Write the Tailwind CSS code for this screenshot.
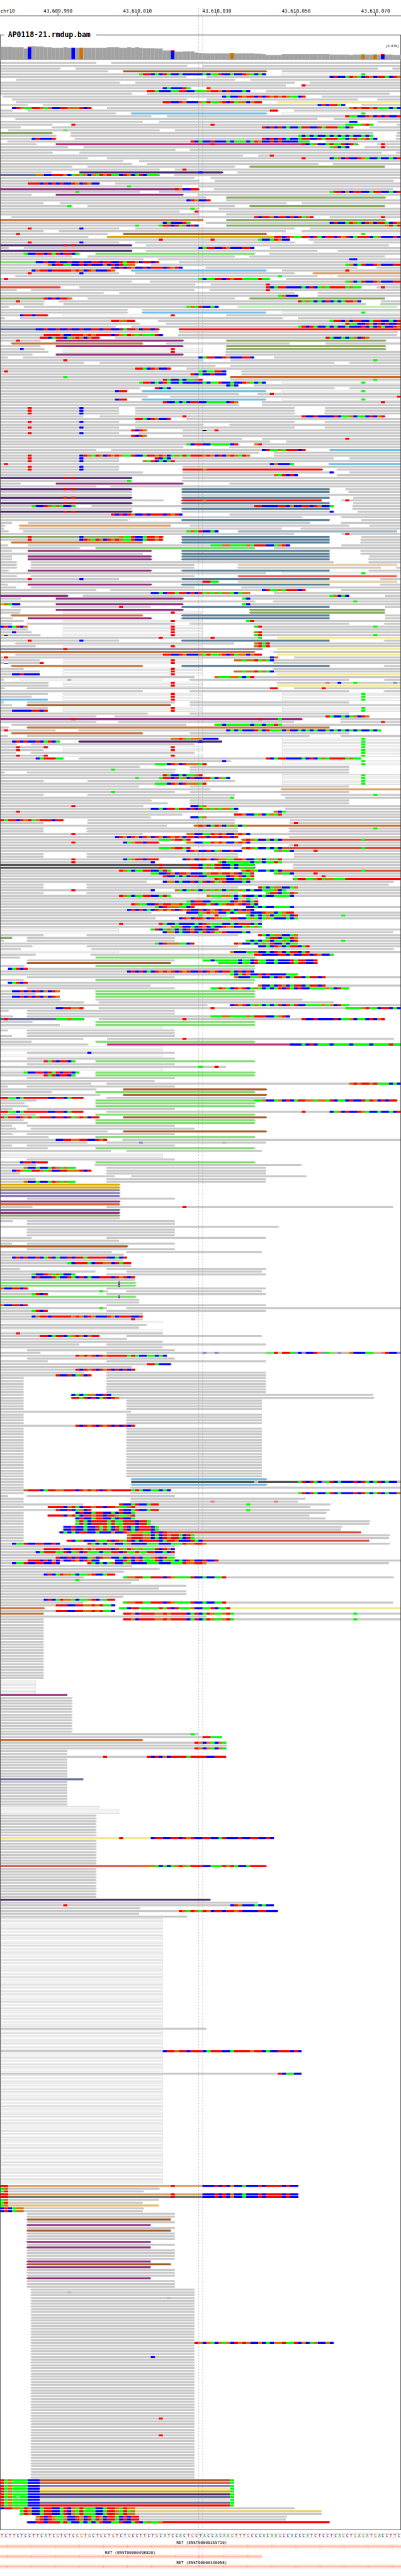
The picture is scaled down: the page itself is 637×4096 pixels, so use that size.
<!DOCTYPE html>
<html lang="en">
<head>
<meta charset="utf-8">
<title>AP0118-21.rmdup.bam</title>
<script src="https://cdn.jsdelivr.net/npm/@tailwindcss/browser@4"></script>
</head>
<body class="bg-white">
<main class="relative w-full overflow-hidden font-['DejaVu_Sans_Mono',monospace] text-black">
  <svg id="head" class="block w-full" viewBox="0 0 1000 150" role="group" aria-label="Position ruler and coverage">
    <path d="M0 39.5H1000" stroke="#000" stroke-width="1.2"/>
    <text x="1" y="32" class="text-[12px]">chr10</text>
    <path d="M0.5 150V87.5H10M240 87.5H999.5V150" fill="none" stroke="#000" stroke-width="1.2"/>
    <text x="20" y="92" class="text-[18px] font-bold">AP0118-21.rmdup.bam</text>
    <text x="995" y="118" text-anchor="end" class="text-[8px]">[0-878]</text>
  </svg>
  <svg id="reads" class="block w-full" viewBox="0 150 1000 6166" role="img" aria-label="Aligned reads">
  </svg>
  <svg id="foot" class="block w-full" viewBox="0 6316 1000 114" role="group" aria-label="Reference sequence and genes">
    <path d="M0 6325.5H1000M0 6335.5H1000" stroke="#aaa"/>
  </svg>
  <svg class="pointer-events-none absolute inset-x-0 top-0 block w-full" viewBox="0 0 1000 6430" aria-hidden="true">
    <path d="M495.5 20V6407M505.5 20V6407" stroke="#969696" stroke-width="1" stroke-dasharray="3 4"/>
  </svg>
</main>
<script>
const NS = 'http://www.w3.org/2000/svg';
const X = n => Math.max(1, Math.round(n * 1000 / 101));
function add(parent, name, attrs, text) {
  const el = document.createElementNS(NS, name);
  for (const k in attrs) el.setAttribute(k, attrs[k]);
  if (text) el.textContent = text;
  parent.appendChild(el);
  return el;
}
const head = document.getElementById('head');
const reads = document.getElementById('reads');
const foot = document.getElementById('foot');

/* Ruler ticks */
['43,609,990', '43,610,010', '43,610,030', '43,610,050', '43,610,070'].forEach((t, i) => {
  const x = 144.5 + i * 198;
  add(head, 'path', { d: `M${x} 32V39`, stroke: '#000' });
  add(head, 'text', { x, y: 32, 'text-anchor': 'middle', class: 'text-[12px]' }, t);
});

/* Coverage: column count x bar height */
const base = { A: '#00ff00', C: '#0000ff', G: '#d17105', T: '#ff0000', a: '#64e664', c: '#8888dc', g: '#ccb49e', t: '#e07878' };
const cov = [[3,31],[3,30],[1,27],[1,31],[1,33],[2,32],[2,30],[3,29],[1,30],[10,29],[3,30],[2,29],[1,30],[1,29],[1,30],[1,29],[3,28],[2,27],[3,22],[2,19],[3,20],[1,17],[1,16],[7,15],[1,16],[5,15],[2,14],[1,13],[4,11],[12,13],[5,12],[1,11],[7,12],[1,13],[2,12],[2,11]];
const snp = { 7: 'CT2', 18: 'CT0', 20: 'GT0', 43: 'CT2', 58: 'GA1', 91: 'GA2', 94: 'GA0', 96: 'CT2' };
let col = 0;
for (const [n, h] of cov) for (let i = 0; i < n; i++, col++) {
  const x = X(col), w = X(col + 1) - x, y = 148 - h;
  add(head, 'rect', { x, y, width: w, height: h, fill: '#b0b0b0' });
  const s = snp[col];
  if (s) {
    add(head, 'rect', { x, y, width: w - 1, height: h, fill: base[s[0]] });
    if (+s[2]) add(head, 'rect', { x, y, width: w - 1, height: s[2], fill: base[s[1]] });
  } else add(head, 'rect', { x: x, y: y + 1, width: w - 1, height: h - 1, fill: '#a2a2a2' });
}
add(head, 'path', { d: 'M1 148.5H999', stroke: '#7a7a7a' });

/* Read colours by mate chromosome; capitals are filled, grey-outlined reads */
const fill = { '': '#c8c8c8', n: '#a45a26', y: '#f2ea8a', c: '#6fbee6', o: '#87a961', m: '#bb2e7c', v: '#4b2468', s: '#666a9c', p: '#902f80', t: '#c6743e', g: '#d3aa00', l: '#80de70', d: '#dda066', r: '#d8503a', e: '#ff0000', q: '#587e98', k: '#545454', u: '#cf6424', w: '#948ca0', f: '#8b78b8', z: '#6e7a70', j: '#e6bc70', J: '#ead078', i: '#d8e4c4', x: '#ffffff', h: '#b8ffaa', P: '#fdd7a0', R: '#ff4040', B: '#94b4d0' };
const outlined = 'xhPRB';

/* Rows: "colour<start-end>" reads, "startBASES" mismatches, "!" deletion, "|" insertion, "*n" repeat */
const V = 'v-33> 16T 18T ', W = 'x<16-51 43T ', Z = 'x71- 91A', Q = 'q<46-83 ', D = '-30 7T 20C ', L = 'l24-64>';
const LONG = '35ATTCACTACCACCCCCACAATCCACCTGACAC';
const S41 = '41TTCCTGCCCGATAAGTCTAGGCGTT';
const S67 = '67TCATTCCCCACTCAGATTTTAGAA';
const S83 = '83CTCCATGACTGCTTACTG', S83b = '83CAGCTCCTGACCACCACT', S83c = '83ATTCGCTTCCATTCCACT';
const S87 = '87TAACCTGCTCTCCT', S87b = '87AGCATCCTGCCCTT', S88 = '88GTGTTGTAAACAC', S82 = '82TACCACAGCTG';
const S9 = '9CCTCCTCCTCCTCCTTCTTCCTATTGCTTCT';
const S50 = '50CATTCCTGCCCTTC', S28 = '28TCTCTGCCTCTTTCTGTC';
const S3 = '3CTGAATTGAGCCTTGGGTCT', S6 = '6ACCTTCTATCTTCA', S66 = '66CTAAGATTTCT';
const S76 = '76TCCTCCCCTCAAGCAACTCGT', S64 = '64TTCCCCTTCGCCTTCTGCCA';
const S53 = '53AAAGGAAAAGATTTCCAGTC', S32 = '32CTCTCACTGTGTCTGTCCTCTGTCTTACTCTC';
const S61 = 'r<61- 61GTGACCACAC 91A', S48 = 'k-64> 40T 48TTCAGATTCCACAAAA <74-';
const S46 = '47GGCCAATGTGCCGTGC', S41b = '41CGGCACCTCATCTAGTCCCCAC';
const S0 = '0TTAACATTTTTTCCTTCATTT', S12 = '12TTTTCGTACTTGTTCTTGAAGT', S19 = '19CTCCATTCCACTCCA', S19b = '19ATACTTTTATAATTTCTTA';
const S16 = '16CCTCCACCTATACTATCACTTTCA', S32b = '32GTTTGGCACTGTTACTA', S22 = '22TACACAGCCAGCCCCAAACCCAAATGGTTG';
const S31 = '31AGGTTAATTTCTGAAAATCCACCAAT', S31b = '31TTGCTTTTGGTGTTTTCATCATGAAGTA';
const S51 = '51CCCTCTCGCCACCCTCTTTTCTCC', TA = ' 0TAGAAAACCC 58A';
const rows = `
-24> 28-
-47> 51-
-15> 19-95> <99-
-27> n31-67> 71-
-67> ${LONG} ${Z}
-47 52- ${S83}
4-59> 63-
-30> 34-74> 78-
-72 76- 76T
-48> 41CACCCTA 52- 52T
-63 37TTACCCAATTCCAAAGTTGCTCCCAC 67-
-33> 37-98>
<1-77 56CACCTGTTCTCTGTGTGAACT 81-
3-47> 52-90> 95-
4-66> ${S41} y<70-
-7 <11-87 80CTCTTAC 91-
3-23> ${S3} 27- ${S88}
-3> 7-70> 68TT 74-
-29> c33-67> ${Z}
-38> 42- ${S87}
<4-80 84-
-36 40-90> 88CC 95-
-13> 18-94> 18T 53T 87AAAAGTA 100-
-5> 13-89> 66TCTCTCACCATTCCTATTTAACG 93-
2-40> 16a 44-
o-13> <18-94 100-
-14> <18-94 75ACACACCACACACACCACA <100-
-14> 8CTCCCT <19-95 66TCTCTCACCATTCCTATTTAACGTAGTAC <100-
<2-78 48TCACCTCCCACAAACATGCCTCTCCCCAAA 82-
-9> m14-90> 53T 76TCAGCCATAATCTA 95- 96T
-17> 21-88> 83AGCAC <92- 96T
-44> <48-
-13> 20-96> <100-
-61> 65- 68T
-22> 27- 76T ${S83b}
-31 35-
-33> 37-80> <84-
-18> 22-59> o<63-97
-40> 44- 46T
-13 v20-56> 50C <60-
s-40> 9GGCCTTTGCAGAGCGATGTAACTGCATCAAA <44-
-49 53-
-50> 54-99>
-25> 7TTTCTCTCTCCTGCTGCC 29-
-46 32A 50-
p-50> 44TGCCTT <54-99
-35> 19A 40- ${S83c}
-8 p14-46> <50-
-52 o57-97>
-53> 47CTGCCT 57-
-11 15-72> 76-
-18> 17A 22-59> o<63-97
-50> 48A 55-
-45> 49- 49T
-50> 57-
<3-79 64TCTTGCTTCTCTAGT 83- 96T
t-51> o57-97>
-48 41CACCCTA <52- ${S83}
-50> 34A 40ATTCTAGCTC o57-97 97GTAT
${D} 34-74> 78-
-11 <15-72 76-
-27> 4T n31-67> ${Z}
-22> g27-69 69TTCTGAATTCTACTTCTGTCATTTCAGCCCTC
-73 40T 53T 65ACCATGCC <78-
${D} 34-74> 79-
${V} <37-98
-2> 6-64> ${S50} 68-
${V} <37-80 85-
-20> ${S6} ${L} <68-
-18> 22-59> <63-97
-36> <40- 88CC <95-
l-40> ${S9} 45-
-34 12GCTTAACCTCTCCCGCTCTAGG 38- ${S87b}
-46> ${S28} <52-90 <95-
-29> 8CGTTCTTTTTGTGCTGCCCTG c33-67> 71- 87T
${D} 34-74> d<79-
<4-80 70A 85-
-68 1T 50ACAATTCTGTTAAAATAA 72-
-33> <38- ${S87b}
-49> 53- 67T
r-15> 20-91> ${S67} <95- 96T
-4> <8-49 <53- 67T
-26> 30-74> 80-
-75> 70AGCCC 80-
o-18> 11TCTCTTG 22-59> o<63-97
-11> 4T <15-91 75TAGACACTCACATTGC 96-
-11 16-92> <96-
-2> 6-55> 47AGATCCAC h<60-100
-32> <36-
-32> c<36-67 ${Z}
-12> 5CTTCTTT ${W} 57-
-1> 5-71> 75-
-34 28TTGGTT <40- ${S83c}
-35> <42- ${S87}
-29> 33- 75ATCTACCACACCACCCTCACTACCTG
s-40> ${S9} e45-
-40 45-100>
-41> 11TTTTGCCTTTGTGTTTTCTGATGAGAAATC <45-100
-25> 10TTCATTCAGTGCGTT 29- ${S82} 97-
-10> 4T p14-46> o57-97>
t<3-36 <42-73 82-
-10> p14-46> o57-97>
-11> 5C ${W} o57-97>
-12> ${W} <57-
-8> p14-46> <57-
-2 <6-64 ${S50} 69-
-51> 16T 58- 94A
-21> 25-84> 88-
-54> 58-
-43> 34TTACTGCCT 47-
-57> 1T 50ACAATTC <61-
-57> 48TCACCTCCC <61-
-50 16A u58-
-51> 41TACCACAAGT 58- 94A
-67 ${LONG} ${Z}
-60> 57CAC <64-
-35> 39-84> 39TCAC 88-
-32> 29CTT c<36-67 ${Z}
-60> <65- 68T
-37> <43- 100T
-32 29CTT c<36-67 ${Z}
-60> 41TCCACACTTCCAAAAACTG 66- 96T
-60> 66-
${D} 34-74> <82- *3
-21 25-97> 46T ${S76}
-43 34TTACTGCCT 47-
${D} 34-74> <82-
-51> <58-
${D} 34-74> <82-
-37> 33TCTG 46- 51! 54T
${D} <35-
-37 33TCTG 46-
-61 66- 87T
-68 72-
-60> 47ACTTCCAAAAACT 66- 64GT
-46> <58-
-24> 28-77> ${S66} c83-
-65> 69-
-63 7T 20CTGATGCTGTGAATCCATTGTGCAGATATTTGTGCTCGTGATG 69-
${D} <39-84 39TCAC 88-
${D} 36GATCACAT 44-
-74 1T 68CGCCCA c<83-
${D} 46-
${D} e46-81> 51G <85-
-36 46-84> 83C 88-
-75 69GATCTC <85-
${V} 46-
-33> 32A <46-
-5> p14-46> <58-
-24> <28-
${V} ${Q} 87-
-33> ${Q} <88-
-33> <46-
${V} ${Q} 89-
-41> e<46-81 51G 86- 87T
${V} ${Q} 89-
-19> 8ACCTGAGACCA 23-84> ${S64} <89-
-33> ${Q} <89-
${V} <46-83 83C 90-
-46 ${S28} <58-
-76> 86-
-32> ${Q} 91-
-3 7-78> 86-
-1> d<5-43 <48-88 93-
-1 <5-71 <76-
-2> <6-55 47AGATCCAC B<60-100
-74 86- 87T
o-41> 7T 20C 30GAATCCATTGT ${Q} 91-
-41> 7T 20CTGATGCTGTGAATCCATTGT ${Q} <91-
t<3-36 ${Q} <91-
-2 7-73> ${S53} 86-
-20> ${L} 69-
-3 p7-38> ${Q} <91-
-36 ${Q} <91-
-3 p7-38> ${Q} 93-
-3 p7-38> ${Q} <93-
-4> <8-84 <93-
-4> <8-49 P<60-100
-4> <8-49 <60-96 <100-
-2> p7-38> ${Q} <93-
-67 ${Z}
-4> <8-49 R<60-100
${D} ${Q} <96-
-55> 51TTAA P<60-100
-2 p7-38> ${Q} <96-
-4 <8-49 <61-
-24> <28-77 ${S66} 86-
-63 38CCACTTATTCTCTAGAGAGGACAGG 69-
p-17> <21-88 83AGCAC 97-
-5> p14-46> 61- 61AC
-64> <69- 89A
g-5> 1GACC p14-46> <61- 61AC
<3-38 30T ${Q} 97-
-5> p14-46> o<63-97
-5 ${W} o<63-97
t<3-36 ${Q} 97-
-3> p7-38> ${Q} 97-
-6 ${W} <62- 62AT
-3 <7-44 <48-88 <97-
0CTCATCG ${W} 64- 64AT 94A
-7 ${W} <66-
-8 3C ${W} <64- 64GT
-10> 1! ${W} <64- 64AT 94A
-66> 40T 53T 65A y<70-
${D} ${Q} <97-
<4-59 64- 64GTAT
-9 ${W} <64- 64GTAT
w-66> 16T y<70-
t-64> <69-
<4-66 ${S41} y<70-
-70> 1T 68CG 74-
-10 ${W} 59- 59GGAGGTAGAC
-10 1! 10T ${W} <69-
t<3-36 ${Q} <97-
-6 ${W} <69-
-10 ${W} <59- 59GGAGGTAGAC
-10 3CCTCCCC ${W} y<70-
-49 54- 54GAAAGGACAT
-1 x<5-41 17g <48-88 <97-
-12> ${W} <70- 82t 85C 89A 99c
-12> ${W} y<70-
-1> <7-70 68TT 74- 81T
-36 <48-88 <97-
-12 ${W} ${Z}
-8 ${W} ${Z}
c-12 ${W} ${Z}
-1 <7-44 <48-88
-3 n<7-43 <48-
-12 ${W} ${Z}
-12 3CCCCCTTCT ${W} ${Z}
-37> <48-88
-24> <29-93 ${S82}
p-76> 18T 65T 70A <86-
-24> <30-74 <86- 96T
<3-47 54- 54AACAAAAAACAACAATA
-2> t<7-83
-14 1T <20-96 57CACACCCTACTAAACGCCACACACCACACACACACCACA
t<3-36 <48-88
-2 <7-78 <86-
-55 43GGTGAGGGCCCC ${Z}
-15> 3CTCTCCTCATCA v<20-56 50C ${Z}
-4> <8-49 ${Z}
-12> 4T 11T ${W} ${Z}
-11 4T ${W} ${Z}
-4 <8-49 ${Z}
-12 4T 11T ${W} ${Z}
-16> 9CATTTAA <20-91 ${S67}
-58> 56C ${Z}
-52> 39AAACTGCTGGGAT ${Z}
-35> <48-88
-44> 28A <48-88
-1> <7-44 <48-88
-51 41TACCACAAGT ${Z}
-58 34A 40ATTCTAGCTCCTTACGAC ${Z}
-11 22-59> ${Z}
-52 39AAACTGCTGGGAT ${Z}
-35 <48-88
-53 d<71-
-44 28A <48-88
-11 22-59> <71- 94A
-59 58A <72-
-38> <48-88
-42> <48-88
-36> 18T 48- 48CCAG
-60> 38CCACTTATTCTCTAGAGAGGAC <72-
-60 4T <69- 69GCA
-46 <59- 59TTGCCAGCAGAT
-38 <48- 48CCAG
-16> 0TATTCTGTAGTTTCTT 22-59> 73-
-11 22-59> 73- 74T
-42 u<49- 49GTGCATGCAGACA
-11 <22-60 <73- 94A
-11 <22-60 <73-
-36 18T 47- ${S46}
-60 29CTGCTGCTGCTGCTGTGCTTCTTCTTCTTCT <73-
-48> 40AAAGTTAT ${S61}
-40> 18T 31CAGTTCTTT <47- ${S46}
-61 <73- 74T
-48 40AAAGTTAT ${S61}
-61 47CTGCCTCAGCCTCC 69- 69AGAAC 79T
-11 <22-60 74- *2
-40 18T 31CAGTTCTTT 46- 46CTGCTTGCTGGAATTGCCAGCAGAT
-39> 18T 38C <55- 55ACAAAAAACAACAATA
${S48} *2
-43> 30TGACAATTCCATA ${S61}
-64 38AACCTGCTTGCCCAGTTGTTGTCAAT <69- 69AGAAC 79T
-64 41TCCACACTTCCAAAAACTGTCAT <74- 81T
-64 54TGGCCAGAGA e<74- 74ATTAAGTAGGAAA
-37 41-99> ${S41b}
-11 <22-98
-11 <22-60 65- 65TACAGGCCAG
-39 18T 38C 44- 44GACAGACAGAGACAGAGACACCAAAGCA
-11 <22-60 67- 67ATTCAATG
-43 30TGACAATTCCATA 52- 52GAAAGGACATCCACACCAAAAC
-65 59C 62A
-65 47ACTTCCAAAAACTGTCAT
-65 33TGAACCTGTTGGTAATTTTATCAGTTGTCTAC
-49> 39ACTGGGAACT <62- 62CCACACCAAAAC
-64> ${S32}
-38> <47- 47CCCAGTGGCCACAGGGCCCTGGCAGTT
-57> 50A 54T 62- 62ACACAGCAAGACT 86A
-39> 45- 45CTGCTTGCTGGAATTCCAGACAGACCCACA
-66>
-66 30T 40TACCACCCCACTGAAACCACTTTCAC
-66 43GAGCCACTGCACCTGGCCAGAGA
x-30 <38- 38ATCAGACACTGCCTCCT
x-30 <41-99 ${S41b}
-11 <22-60 <65- 65TACAGGCCAG
o-3 <7-44 <67- 67ATTCAATG
-1 <7-44 <62- 62ACACAGCAAGACT 86A
-49 39ACTGGGAACT <59- 59TGCCACAGATCCACAA
-8> <22-60 <65- 65CCACTGCATTCAT
-5> 23-99>
x-30 58- 58GCCCAAGCCACTGCATTCAT
-9 <23-84 ${S64}
-5 ${L}
<7-44 51AACAAAAAACAACTAACCACCCTATTCCT
n<7-43 <55-80 55AAAAACAACTAACCACCCTATTCCT
-6> ${L}
2-64> 2CATCT
-64 ${S32}
-75 58ACATGCCTCTCCCCAAA
<7-44 59- 59GCCCAAGCCACTGCATTCATTCT
-6 ${L}
<2-64 2CATCT
-38 <65- 65GCCACTGCATTCATTCT
<7-44 53AATGACTGTCAGACACATCTACTCCAAAAGACTAA
-15> 3CCTCTCTCGCTG ${L}
-9 ${L}
-15 3CCTCTCTCGCTG ${L}
-15> 24-76>
-21> <25-84
-52> <58- 58CTGTCAGACACATCTATCCAAAAGAGCTAA
-21> 14CCTTGGT <25- 53T 87AAAAGTAACTTCAC
-2> <7-44
<7-44
-3> <7-73 ${S53}
s-21> 1T 14AAAGAAA <25-97 46T ${S76}
-8> ${L}
-15 ${L}
x-41
-2 <7-44
<7-44
-3 <7-44
-21 27-99> 46T
-8 ${L}
-22> m27- 73CCCACTCAAACAAAACAAAACAAAATAA
x-41 *2
<7-44 22C
x-41
<7-44
-19> 11TATCTTCA ${L}
<7-44
-57 50A 54T
x-41
-20 ${S6} ${L}
-19 11TATCTTCA ${L}
<7-44
-39
-23 <27- ${S88}
-2 <7-44
-24> n31-67>
-13 ${L}
-25> n31-67>
-21> ${S0} <27-67
-9> l24-100> 64AAGCCAGCTCATTGGAGGATCAACTCCTATGCTCTT
-6> ${L}
-7> ${L}
-3> <7-44
-21 ${S0} <27- 76T ${S83b}
-9 ${L}
-25 0TATTCTGTAGTTTCTTCTAGTGCTT n31-67>
-6 ${L}
-7 ${L}
-3 <7-44
-4 <8-49
-27> n31-67>
-3> <7-44
-12> ${L}
-27 14CCTTGGTTCCTGT <31-
-22 <27-67 35c 56g
-3 <7-44
-12 ${L}
-28 <32-66
x-41 *2
<7-44
-12 5CTTCTTT ${L}
-9> <24-76
-19> 6GCCACCATGAGAA <27-67
-23 ${S3} <27-67
-5 <27-67
-29 33-77>
-9 <27-67
-19 6GCCACCATGAGAA <27-67
g-30> *2
w-30>
f-30> *2
<7-44
p-30>
u-30>
-8> <27-99 46T
s-30>
p-30>
o-30>
-30>
-3> <7-44
<7-44
-70>
<7-44 *3
-8 <27-67
-30
-3 <7-44
n-32>
<7-44
-28> <32-66
-31>
-32 3CTCTCCTCATCACCTCTTATTTTTCCACT
-31
-33 17ACTTTACTTGGCTATT
-33
-5 <27-67
-24 <32-66
-19 8ACCTGAGACCA <27-67
-34 8CTCCCTACCTACTCACCTTTCTGTCT
-34
l-34> 30| *2
-7> 0GCCTTCT <27-67
-27> 25A <32-66
-12> 8ATCT <27-67
l-34> 30|
-35 *2
-7 0GCCTTCT <27-67
-27 25A <32-
-12 8ATCT <27-67
-36
-36 8CGTTCTTTTTGTGCTGCCCTGCTTTCCT
-36 33T
x-41
-37
-35
x-41
-41 4T
-25 10TTCATTCAGTGCGTT <32-66
-32
-41
-20 <27-67
-41
<7-44
-10> <27- 51c 54c 67aaTgTTAcCcCCTtcAagcggGCCCAAggtTCCc
-42 19TGTGTCTGTTTTTATACCAACAC
<7-44
-12 <27-67
-43> 37TTACCC
-33>
-34> 19TCTGTCTGTCTCTCT
-21> <27-67
-23> 14TCCTCAGCT <27-67
-6 <27-67 *6
-6 <18-94 18CACAGGCCTC
-6 18-94> 18TTATCTCATCTG
-6 <32-66 *4
-33
-6 <32-66 *4
-34 19TCTGTCTGTCTCTCT
-6 <32-66 *18
-6 c33-67>
-6 k33- 64g 75ATCTACcATCACCCTCTACATCACCg
-6 c33-67>
-6 <33-
-43 6GTTTCATTGGTTTCTGTGTCTGTTTTTATACCAACAC
-6 <33- 75ATCTACCATCACCCTCTACATCACCG
-2 <7-44
-6 <33-77
-6 <33-75 53t 69t
-21 30-83> 30TCCATCCATT 62A
-6 12-78> ${S12}
-23 14TCCTCAGCT <30-83 30TCCATCCATT 62A
-6 19-82> ${S19}
-6 <12-78 ${S12}
-6 <19-82 ${S19}
-6 19-93> ${S19b}
-6 <19-93 ${S19b}
-6 16-86> ${S16}
-6 <16-86 ${S16}
-6 r<15-91 15CACACTTCCACCCGCCTGAGGAACTCT
-6 32-98> ${S32b}
-6 <32-98 ${S32b}
-6 r<17-93 17TCAGCCCGAATCTGATCACTTTTCATTGCCCTAC
-15> 3CAATCCTTCCTC 22-98> ${S22}
-44
-44 11TTTTGCCTTTGTGTTTTCTGATGAGAAATCTGC
-44 9CATTTAATCAGCTAAACAATTCTAATAATTCCACT
-44
-44 14TCCTCTCCAGCTGGCCACTCTCAAGTCTAA
-25 7TTTCTCtCtCCTGCTGCC 29- 29CCTACGTAAATCAGACACTGCCTCCT
-15 3CAATCCTTCCTC <22-98 ${S22}
-33>
-40>
-31>
-29> 11CTCATGGACAAGTCCATT
-21> 31-99> ${S31}
-35 19A
-33
-47
-40
-47 *2
-31
-29 11CTCATGGACAAGTCcATT
-21 <31-99 ${S31}
-29> 14TTTCCTTGGTGTAAC
t-11> y<30- 30AACTTAAAAATATCTAAAGCCAATCAAT
-29 14TTTCCTTGGTGTAAC
t-11 31- ${S31b} 89A
-52
-11 31- ${S31b} 89A
-11 *21
x-9 *5
p-17
-18> *13
-50 48A
-56 51TTAAA
t-36
-57> 49TGCGACGA
-57>
-57> 49TGCGACGA
-17 *2
-57 26T 37TCTCGCTTTTATTTTCCTTT
-17 *7
s-21
-17 *9
x-25
x-30 *2
-24> *8
y-69> 30T 38CTTCCTTCTGTCCTTCCATCCCTCCTTCCTC
-24> *9
r-67> 36GGGACACAGTGATTTCCAAATGTACCATTTT
-24> *11
v-53
-65
-69 16T 58CTGCCCACACC
-35>
-70 45TGATGATGCTTCTTGTCCCCTTCCC
-35
-47>
x-41 *39
-52
x-41 *7
-76 41CTTGTTCTTTCATTTCCATTTTGTTCACCTTTCTC
x-41 *7
-76 70TCAACC
x-41 *39
d-75> 0TT 43T ${S51}
-40> 0AG
-36> 0AT
d-75> 0TT 43T ${S51}
z-75> 0TT 43T ${S51}
-40 0AG
-36 0AT
j-40 0AG
-36> 0CTCAGG
-36 0CTCAGG
<7-44 *2
n<7-43
<7-44
p<7-38
<7-44
n<7-43
<7-44 *3
p<7-38
<7-44
p<7-38
<7-44 *4
p<7-38
n<7-43
p<7-38
<7-44 *3
p<7-38
<7-44 *3
<8-49
<8-49 17g
<8-49
<8-49 42g
<8-49 *15
<8-84 49TGCGACGAGCTGTGCCGCACGGTAATCGCAGCCGC
<8-49 *4
<8-49 38C
<8-49 *21
<8-49 40T
<8-49 *5
<8-49 40T
<8-49 *15
n10-58${TA}
r10-58${TA}
f10-58${TA}
y10-58${TA}
g10-58${TA}
v10-58${TA}
s10-58${TA} 4a
i10-58${TA}
s10-58${TA}
e10-58${TA}
-74> 0CTTGGATGCCATTCCATCGATAAACCATTGATGG
J<5-81 5ATGCCATTCCATCGATAAACCATTGATAG
<5-81 5ATGCCATTCCATCGATAAACCATTGATGG
9-72> 9GTCTGAAGCCTGCTATGCTTACTCTT
<9-72 9GTCTGAAGCCTGCTATGCTTACTCTT
e<7-83 7CCTTCTTTATACCACACATCCAATCCATCAGAAG
`.trim().split('\n');

const bars = {}, edges = [], marks = {}, gaps = [], dels = [], ins = [];
const box = (x, y, w, h) => `M${x} ${y}h${w}v${h}h${-w}z`;
let y = 154;
for (const row of rows) {
  const tokens = row.trim().split(/\s+/);
  let times = 1;
  if (tokens[tokens.length - 1][0] === '*') times = +tokens.pop().slice(1);
  for (; times > 0; times--, y += 7) for (const t of tokens) {
    let m = t.match(/^([A-Za-z]?)(<?)(\d*)-(\d*)(>?)$/);
    if (m) {
      const a = X(+m[3] || 0), b = Math.min(999, X(m[4] ? +m[4] : 101));
      let d;
      if (outlined.includes(m[1]) && m[1]) {
        d = box(a, y, b - a, 5);
        const l = m[2] ? `l-3 2l3 2` : 'v4', r = `V${y + 0.5}`;
        edges.push(`M${a + 0.5} ${y + 0.5}${l}H${b - 0.5}${r}z`);
      } else {
        d = `M${a} ${y}H${b}${m[5] ? 'l4 2.5l-4 2.5' : 'v5'}H${a}${m[2] ? 'l-4 -2.5z' : 'z'}`;
      }
      (bars[m[1]] ||= []).push(d);
      continue;
    }
    m = t.match(/^(\d+)(.+)$/);
    [...m[2]].forEach((c, i) => {
      const x = X(+m[1] + i), w = Math.min(999, X(+m[1] + i + 1)) - x;
      if (c === '!') { gaps.push(box(x, y, w, 5)); dels.push(box(x, y + 2, w, 2)); }
      else if (c === '|') ins.push(box(x - 1, y, 2, 5) + box(x - 2, y - 1, 4, 2) + box(x - 2, y + 4, 4, 2));
      else (marks[c] ||= []).push(box(x, y, w, 5));
    });
  }
}
for (const k in bars) add(reads, 'path', { d: bars[k].join(''), fill: fill[k] });
add(reads, 'path', { d: edges.join(''), fill: 'none', stroke: '#c4c4c4' });
for (const k in marks) add(reads, 'path', { d: marks[k].join(''), fill: base[k] });
add(reads, 'path', { d: gaps.join(''), fill: '#fff' });
add(reads, 'path', { d: dels.join(''), fill: '#000' });
add(reads, 'path', { d: ins.join(''), fill: '#7014dc' });
add(reads, 'path', { d: 'M0.5 150V6314.5H999.5V150', fill: 'none', stroke: '#000', 'stroke-width': 1.2 });

/* Reference bases */
const ink = { A: '#009600', C: '#000088', G: '#aa6414', T: '#aa0000' };
[...'TCTTCTCCTTCATCGTCTCGGTGCTGCTGTCTGCCTTCTGCATCCACTGCTACCACAAGTTTGCCCACAAGCCACCCATCTCCTCAGCTGAGATGACCTTC'].forEach((c, i) =>
  add(foot, 'text', { x: Math.round((i + 0.5) * 1000 / 101), y: 6334, 'text-anchor': 'middle', fill: ink[c], class: 'text-[10px]' }, c));

/* Gene transcripts */
[['RET (ENST00000355710)', 503, 6352, 1000], ['RET (ENST00000498820)', 325, 6377, 653], ['RET (ENST00000340058)', 503, 6402, 1000]].forEach(([name, cx, top, w]) => {
  add(foot, 'rect', { x: 0, y: top, width: w, height: 10, fill: '#ffdccc' });
  add(foot, 'rect', { x: 0, y: top + 4, width: w, height: 2, fill: '#ffaa98' });
  for (let x = 17; x < w; x += 60) add(foot, 'path', { d: `M${x} ${top + 1}l4 4l-4 4z`, fill: '#ffaa98' });
  add(foot, 'text', { x: cx, y: top - 1, 'text-anchor': 'middle', class: 'text-[10px]' }, name);
});
</script>
</body>
</html>
